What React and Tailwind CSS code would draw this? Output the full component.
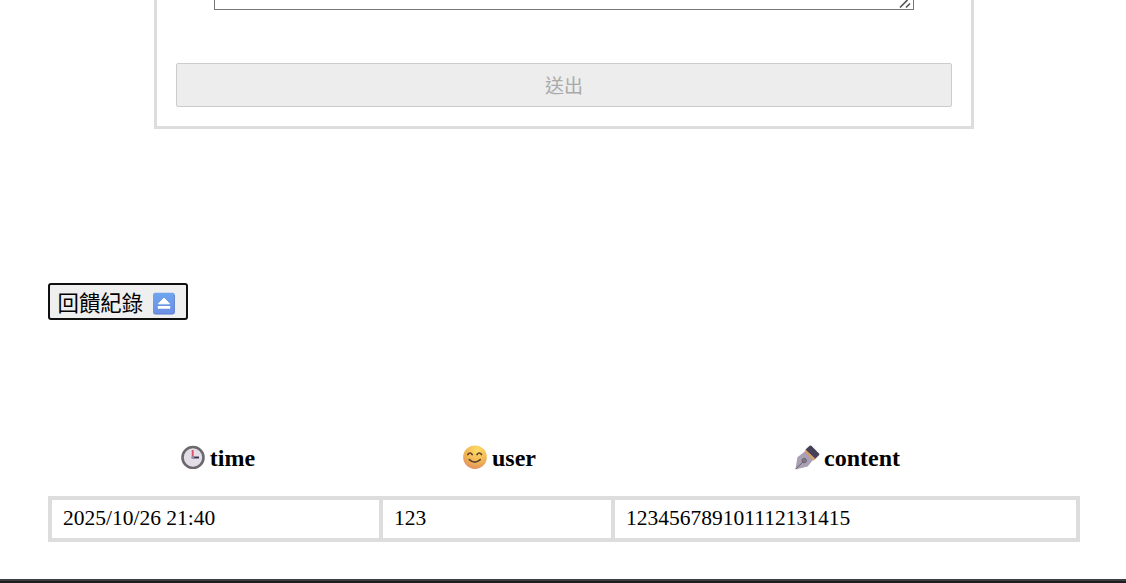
import React from "react";

function EjectIcon() {
  return (
    <svg className="mt-[3px] ml-[9px] h-[23px] w-[23px] shrink-0" viewBox="0 0 23 23">
      <defs>
        <linearGradient id="eject" x1="0" y1="0" x2="0" y2="1">
          <stop offset="0" stopColor="#6fa6ee" />
          <stop offset="1" stopColor="#6b8ee4" />
        </linearGradient>
      </defs>
      <rect x="1" y="0.7" width="21.8" height="21.6" rx="2.2" fill="url(#eject)" />
      <path d="M1.6 21.2Q1.9 22 3.4 22H20.4Q22.4 22 22.4 20V3" fill="none" stroke="#5f78cb" strokeWidth="0.8" />
      <path d="M12 6L17.6 11.8H6.4Z" fill="#fff" stroke="#fff" strokeWidth="1" strokeLinejoin="round" />
      <rect x="5.8" y="14" width="12.4" height="2.8" rx="0.5" fill="#fff" />
    </svg>
  );
}

function ClockIcon() {
  return (
    <svg className="h-6 w-6 shrink-0" viewBox="0 0 24 24">
      <circle cx="12" cy="12.5" r="10.5" fill="#e2dde7" stroke="#6c686d" strokeWidth="2.6" />
      <path d="M11.7 5V12.5" stroke="#dd5268" strokeWidth="1.9" />
      <path d="M12 12.5H18" stroke="#38304f" strokeWidth="1.9" />
      <circle cx="11.8" cy="12.5" r="1.5" fill="#99919f" />
    </svg>
  );
}

function SmileIcon() {
  return (
    <svg className="h-6 w-6 shrink-0" viewBox="0 0 24 24">
      <defs>
        <radialGradient id="face" cx="0.6" cy="0.2" r="0.85">
          <stop offset="0" stopColor="#ffdc67" />
          <stop offset="0.6" stopColor="#f0b654" />
          <stop offset="1" stopColor="#df8b65" />
        </radialGradient>
      </defs>
      <circle cx="12" cy="12.2" r="11.8" fill="url(#face)" />
      <path d="M4.8 9.6Q7 6.4 9.2 9.6M14 9.6Q16.3 6.4 18.5 9.6M6.3 14.6Q11.7 19.6 17.2 14.6" fill="none" stroke="#61412f" strokeWidth="1.7" strokeLinecap="round" />
    </svg>
  );
}

function PenIcon() {
  return (
    <svg className="h-6 w-6 shrink-0 overflow-visible" viewBox="0 0 24 24">
      <path d="M0.4 24.4L2.4 12.2L10.2 6.2L18.4 14.6L12.6 21.6Z" fill="#aaa0b3" />
      <path d="M0.8 24L8 16.8" stroke="#655d69" strokeWidth="1" />
      <circle cx="9.2" cy="15.6" r="2.2" fill="#82778b" stroke="#655d69" strokeWidth="0.9" />
      <path d="M9.4 6.6L11 4.4L20.8 13.6L18.6 15.8Z" fill="#d79c6c" />
      <path d="M10.5 4.6L14.6 0.8Q15.6 0.1 16.6 1L24 8.4Q24.8 9.4 23.9 10.3L20.4 13.8Z" fill="#453f58" />
    </svg>
  );
}

function ColumnHeading({ icon, children }) {
  return (
    <div className="flex items-center justify-center gap-[5px] text-2xl leading-7 font-bold">
      {icon}
      <span className="translate-y-px">{children}</span>
    </div>
  );
}

export default function App() {
  return (
    <div className="flex h-[583px] w-[1126px] flex-col overflow-hidden bg-white font-['Liberation_Serif','Noto_Sans_CJK_TC',serif] text-black">
      <form className="ml-[154px] flex h-[129px] w-[820px] shrink-0 flex-col border-x-[3px] border-b-[3px] border-[#ddd] px-[19px]">
        <div className="mx-[38px] flex h-[10px] shrink-0 items-end justify-end border-x border-b border-[#767676]">
          <svg className="h-[9px] w-[14px]" viewBox="0 0 14 9">
            <path d="M1 7.5L8.5 0M7 7.5L11 3.5" stroke="#555" strokeWidth="1.7" fill="none" />
          </svg>
        </div>
        <button type="button" disabled className="mt-[53px] h-11 shrink-0 rounded-[2px] border border-[#ccc] bg-[#ededed] font-['Noto_Sans_CJK_TC',sans-serif] text-[19px] leading-6 font-normal text-[#aaa]">
          送出
        </button>
      </form>

      <button type="button" className="mt-[154px] ml-12 flex h-[37px] w-[140px] shrink-0 items-center rounded-[3px] border-2 border-[#101010] bg-[#efefef] pl-[7.5px] font-['Noto_Sans_CJK_TC',sans-serif] text-[21.4px] leading-8 whitespace-nowrap">
        <span>回饋紀錄</span>
        <EjectIcon />
      </button>

      <div className="mt-[123px] ml-12 grid h-7 w-[1032px] shrink-0 grid-cols-[340px_223px_473px]">
        <ColumnHeading icon={<ClockIcon />}>time</ColumnHeading>
        <ColumnHeading icon={<SmileIcon />}>user</ColumnHeading>
        <ColumnHeading icon={<PenIcon />}>content</ColumnHeading>
      </div>

      <div className="mt-[25px] ml-12 grid h-[46px] w-[1032px] shrink-0 grid-cols-[327px_228px_461px] gap-1 border-4 border-[#ddd] bg-[#ddd] text-[21.5px] leading-9">
        <div className="bg-white pl-[11px]">2025/10/26 21:40</div>
        <div className="bg-white pl-[11px]">123</div>
        <div className="bg-white pl-[11px]">123456789101112131415</div>
      </div>

      <div className="mt-auto h-1 shrink-0 border-t-2 border-[#3c3e40] bg-[#1b1d1f]" />
    </div>
  );
}
